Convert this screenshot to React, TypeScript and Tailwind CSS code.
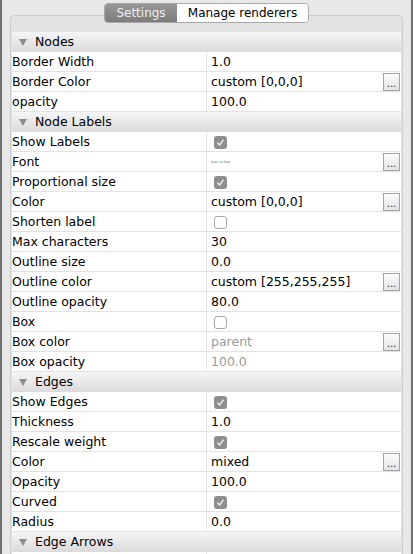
type Row =
  | { kind: "group"; label: string }
  | {
      kind: "prop";
      label: string;
      value?: string;
      check?: boolean;
      dots?: boolean;
      disabled?: boolean;
      tiny?: boolean;
    };

const rows: Row[] = [
  { kind: "group", label: "Nodes" },
  { kind: "prop", label: "Border Width", value: "1.0" },
  { kind: "prop", label: "Border Color", value: "custom [0,0,0]", dots: true },
  { kind: "prop", label: "opacity", value: "100.0" },
  { kind: "group", label: "Node Labels" },
  { kind: "prop", label: "Show Labels", check: true },
  { kind: "prop", label: "Font", value: "Arial 12 Plain", tiny: true, dots: true },
  { kind: "prop", label: "Proportional size", check: true },
  { kind: "prop", label: "Color", value: "custom [0,0,0]", dots: true },
  { kind: "prop", label: "Shorten label", check: false },
  { kind: "prop", label: "Max characters", value: "30" },
  { kind: "prop", label: "Outline size", value: "0.0" },
  { kind: "prop", label: "Outline color", value: "custom [255,255,255]", dots: true },
  { kind: "prop", label: "Outline opacity", value: "80.0" },
  { kind: "prop", label: "Box", check: false },
  { kind: "prop", label: "Box color", value: "parent", dots: true, disabled: true },
  { kind: "prop", label: "Box opacity", value: "100.0", disabled: true },
  { kind: "group", label: "Edges" },
  { kind: "prop", label: "Show Edges", check: true },
  { kind: "prop", label: "Thickness", value: "1.0" },
  { kind: "prop", label: "Rescale weight", check: true },
  { kind: "prop", label: "Color", value: "mixed", dots: true },
  { kind: "prop", label: "Opacity", value: "100.0" },
  { kind: "prop", label: "Curved", check: true },
  { kind: "prop", label: "Radius", value: "0.0" },
  { kind: "group", label: "Edge Arrows" },
  { kind: "prop", label: "" },
];

function CheckBox({ on }: { on: boolean }) {
  if (!on)
    return (
      <div className="w-[13px] h-[13px] rounded-[3px] border border-[#a9a9a9] bg-white" />
    );
  return (
    <div className="w-[13px] h-[13px] rounded-[3px] bg-[#8e8e8e] flex items-center justify-center">
      <svg width="9" height="9" viewBox="0 0 9 9">
        <path d="M1.5 4.8 L3.6 7 L7.6 1.6" fill="none" stroke="#f4f4f4" strokeWidth="1.3" />
      </svg>
    </div>
  );
}

function Dots() {
  return (
    <div className="w-[17px] h-[18px] border border-[#a3a3a3] bg-gradient-to-b from-[#fbfbfb] to-[#e4e4e4] flex items-end justify-center pb-[1px] text-[10px] leading-none text-[#333]">
      ...
    </div>
  );
}

export default function App() {
  return (
    <div
      className="w-[413px] h-[554px] overflow-hidden bg-[#e8e8e8] border-l-2 border-r-2 border-[#6e6e6e] relative"
      style={{ fontFamily: '"DejaVu Sans", sans-serif' }}
    >
      <div className="absolute left-[102px] top-[3px] z-10 flex h-[20px] rounded-[4px] border border-[#a8a8a8] overflow-hidden text-[12px] leading-none">
        <div className="w-[72px] flex items-center justify-center bg-gradient-to-b from-[#979797] to-[#7c7c7c] text-[#eeeeee]">
          Settings
        </div>
        <div className="w-[131px] flex items-center justify-center bg-white text-black">
          Manage renderers
        </div>
      </div>
      <div className="mt-[15px] ml-[8px] w-[393px] h-[560px] rounded-[4px] border border-[#cdcdcd] bg-[#e3e3e3] pt-[16px] pl-[1px]">
        <div className="w-[389px] bg-white">
          {rows.map((r, i) =>
            r.kind === "group" ? (
              <div
                key={i}
                className="h-5 flex items-center bg-gradient-to-b from-[#f6f6f6] to-[#dadada] text-[12.5px] leading-none text-black"
              >
                <svg width="8" height="7" viewBox="0 0 8 7" className="ml-[7px] mr-[8px]">
                  <polygon points="0,0 8,0 4,7" fill="#8d8d8d" />
                </svg>
                {r.label}
              </div>
            ) : (
              <div key={i} className="h-5 flex border-b border-[#e2e2e2] text-[12.5px] leading-none text-black">
                <div className="w-[195px] border-r border-[#e2e2e2] flex items-center pt-[1px]">
                  {r.label}
                </div>
                <div className="flex-1 flex items-center pl-[4px] pr-[1px]">
                  <div className="flex-1 flex items-center pt-[1px]">
                    {r.check !== undefined ? (
                      <div className="ml-[3px]">
                        <CheckBox on={r.check} />
                      </div>
                    ) : r.tiny ? (
                      <span className="text-[3px] text-[#555]">{r.value}</span>
                    ) : (
                      <span className={r.disabled ? "text-[#9a9a9a]" : ""}>{r.value}</span>
                    )}
                  </div>
                  {r.dots && <Dots />}
                </div>
              </div>
            )
          )}
        </div>
      </div>
    </div>
  );
}
